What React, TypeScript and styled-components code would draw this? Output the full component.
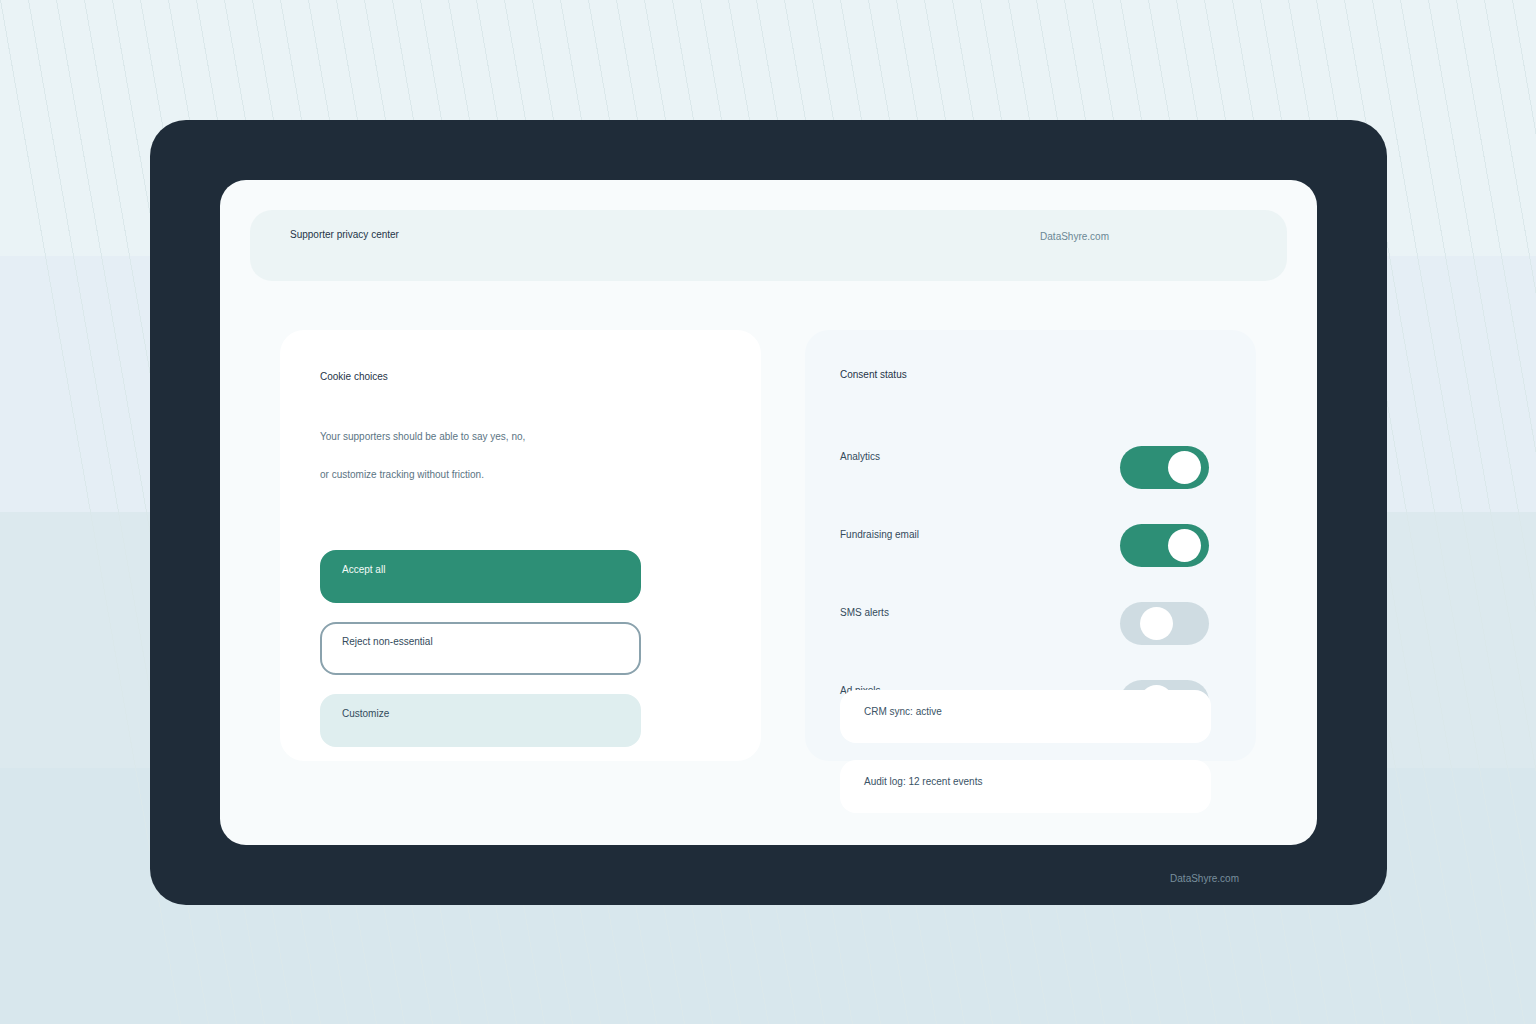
import React, { useState } from "react";
import styled, { createGlobalStyle } from "styled-components";

const GlobalStyle = createGlobalStyle`
  *, *::before, *::after { box-sizing: border-box; }
  body {
    margin: 0;
    font-family: "Liberation Sans", Arial, sans-serif;
    font-size: 10px;
    line-height: 18px;
    color: #1f3a4d;
  }
`;

const Page = styled.div`
  position: relative;
  min-height: 100vh;
  padding: 120px 149px 119px 150px;
  background: linear-gradient(
    #eaf3f6 0 25%,
    #e5eef5 25% 50%,
    #dce9ee 50% 75%,
    #d8e7ed 75%
  );
`;

const Backdrop = styled.svg`
  position: absolute;
  inset: 0;
  width: 100%;
  height: 100%;
`;

const Device = styled.div`
  position: relative;
  padding: 60px 70px 17px;
  border-radius: 36px;
  background: #1f2c39;
`;

const Screen = styled.main`
  padding: 30px 30px 84px;
  border-radius: 26px;
  background: #f8fbfc;
`;

const Header = styled.header`
  display: flex;
  justify-content: space-between;
  align-items: flex-start;
  min-height: 71px;
  padding: 16px 178px 16px 40px;
  border-radius: 22px;
  background: #ecf4f5;
`;

const Heading = styled.h2`
  margin: 0;
  font-size: 10px;
  font-weight: 400;
  line-height: 18px;
  color: #1f3448;
`;

const Brand = styled.a<{ $tone: string }>`
  color: ${(p) => p.$tone};
  text-decoration: none;
`;

const HeaderBrand = styled(Brand)`
  padding-top: 2px;
`;

const Footer = styled.footer`
  display: flex;
  justify-content: flex-end;
  padding: 25px 78px 0;
`;

const Columns = styled.div`
  display: grid;
  grid-template-columns: 481fr 451fr;
  gap: 44px;
  padding: 49px 31px 0 30px;
`;

const ChoicesCard = styled.section`
  padding: 38px 120px 14px 40px;
  border-radius: 24px;
  background: #ffffff;
`;

const Copy = styled.p`
  margin: 32px 0 56px;
  line-height: 38px;
  color: #5b7483;
`;

const Actions = styled.div`
  display: flex;
  flex-direction: column;
  gap: 19px;
`;

const Action = styled.button<{ $fill: string; $ink: string; $edge?: string }>`
  display: flex;
  align-items: flex-start;
  height: 53px;
  padding: 9px 20px;
  border: 2px solid ${(p) => p.$edge ?? p.$fill};
  border-radius: 16px;
  background: ${(p) => p.$fill};
  color: ${(p) => p.$ink};
  font: inherit;
  text-align: left;
  cursor: pointer;
`;

const ConsentCard = styled.section`
  padding: 36px 45px 0 35px;
  border-radius: 24px;
  background: #f3f8fb;
`;

const ToggleList = styled.div`
  display: flex;
  flex-direction: column;
  gap: 35px;
  padding: 62px 2px 0 0;
`;

const ToggleRow = styled.div`
  display: flex;
  justify-content: space-between;
  align-items: flex-start;
`;

const ToggleLabel = styled.label`
  padding-top: 2px;
  color: #334b5c;
`;

const Switch = styled.input`
  appearance: none;
  width: 89px;
  height: 43px;
  margin: 0;
  padding: 5px 20px;
  border-radius: 22px;
  background: #cfdce2;
  cursor: pointer;

  &::before {
    content: "";
    display: block;
    width: 33px;
    height: 33px;
    border-radius: 50%;
    background: #ffffff;
  }

  &:checked {
    background: #2d8f76;
    padding-left: 48px;
    padding-right: 8px;
  }
`;

/* The status notes slide up over the last toggle and hang below the card. */
const StatusList = styled.div`
  position: relative;
  display: flex;
  flex-direction: column;
  gap: 17px;
  margin: -33px 0 -52px;
`;

const StatusNote = styled.div`
  height: 53px;
  padding: 13px 24px;
  border-radius: 16px;
  background: #ffffff;
  color: #3a5366;
`;

const STRIPES = Array.from({ length: 55 }, (_, i) => i * 28);

const TOGGLES = [
  { id: "analytics", label: "Analytics", on: true },
  { id: "email", label: "Fundraising email", on: true },
  { id: "sms", label: "SMS alerts", on: false },
  { id: "pixels", label: "Ad pixels", on: false },
];

function ConsentToggle({ id, label, on }: { id: string; label: string; on: boolean }) {
  const [checked, setChecked] = useState(on);
  return (
    <ToggleRow>
      <ToggleLabel htmlFor={id}>{label}</ToggleLabel>
      <Switch
        id={id}
        type="checkbox"
        checked={checked}
        onChange={(e) => setChecked(e.target.checked)}
      />
    </ToggleRow>
  );
}

export default function App() {
  return (
    <Page>
      <GlobalStyle />
      <Backdrop viewBox="0 0 1536 1024" preserveAspectRatio="none" aria-hidden="true">
        {STRIPES.map((x) => (
          <line
            key={x}
            x1={x + 0.5}
            y1={0}
            x2={x + 180.5}
            y2={1024}
            stroke="#dbe8eb"
            shapeRendering="crispEdges"
          />
        ))}
      </Backdrop>
      <Device>
        <Screen>
          <Header>
            <Heading as="h1">Supporter privacy center</Heading>
            <HeaderBrand href="#" $tone="#6b8794">DataShyre.com</HeaderBrand>
          </Header>
          <Columns>
            <ChoicesCard>
              <Heading>Cookie choices</Heading>
              <Copy>
                Your supporters should be able to say yes, no,
                <br />
                or customize tracking without friction.
              </Copy>
              <Actions>
                <Action type="button" $fill="#2d8f76" $ink="#f4fbf8">Accept all</Action>
                <Action type="button" $fill="#ffffff" $edge="#8aa2ad" $ink="#334b5c">
                  Reject non-essential
                </Action>
                <Action type="button" $fill="#dfeeef" $ink="#334b5c">Customize</Action>
              </Actions>
            </ChoicesCard>
            <ConsentCard>
              <Heading>Consent status</Heading>
              <ToggleList>
                {TOGGLES.map((t) => (
                  <ConsentToggle key={t.id} {...t} />
                ))}
              </ToggleList>
              <StatusList>
                <StatusNote>CRM sync: active</StatusNote>
                <StatusNote>Audit log: 12 recent events</StatusNote>
              </StatusList>
            </ConsentCard>
          </Columns>
        </Screen>
        <Footer>
          <Brand href="#" $tone="#788f9d">DataShyre.com</Brand>
        </Footer>
      </Device>
    </Page>
  );
}
